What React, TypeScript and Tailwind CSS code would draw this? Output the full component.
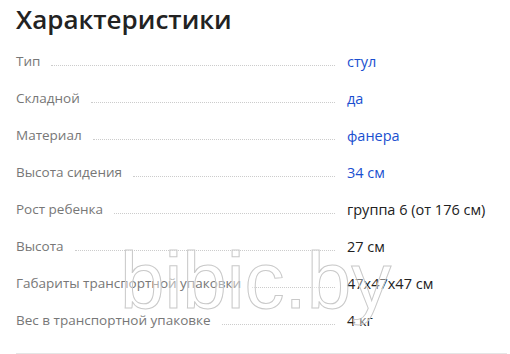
const rows: { label: string; value: string; link?: boolean }[] = [
  { label: 'Тип', value: 'стул', link: true },
  { label: 'Складной', value: 'да', link: true },
  { label: 'Материал', value: 'фанера', link: true },
  { label: 'Высота сидения', value: '34 см', link: true },
  { label: 'Рост ребенка', value: 'группа 6 (от 176 см)' },
  { label: 'Высота', value: '27 см' },
  { label: 'Габариты транспортной упаковки', value: '47x47x47 см' },
  { label: 'Вес в транспортной упаковке', value: '4 кг' },
];

export default function App() {
  return (
    <div className="relative w-[510px] h-[354px] overflow-hidden bg-white px-4 font-['Open_Sans',sans-serif]">
      <h2 className="pt-[2px] text-[26px] leading-[34px] font-semibold text-[#222]">Характеристики</h2>

      {/* Spec rows */}
      <div className="mt-[7px] flex flex-col">
        {rows.map((r) => (
          <div key={r.label} className="flex h-[37px] items-center">
            <div className="flex w-[319px] items-baseline">
              <span className="text-[13.5px] text-[#777]">{r.label}</span>
              <span className="ml-[11px] flex-1 border-b border-dotted border-[#ccc]" />
            </div>
            <span className={`ml-[12px] text-[14.5px] ${r.link ? 'text-[#1a4fd0]' : 'text-[#222]'}`}>{r.value}</span>
          </div>
        ))}
      </div>

      <div className="absolute bottom-0 left-4 right-[3px] h-px bg-[#e5e5e5]" />

      {/* watermark */}
      <div className="pointer-events-none absolute left-[120px] top-[241px] font-['Liberation_Sans',sans-serif] text-[80px] leading-none text-white/40 [-webkit-text-stroke:1px_#c9c9c9]">
        bibic.by
      </div>
    </div>
  );
}
